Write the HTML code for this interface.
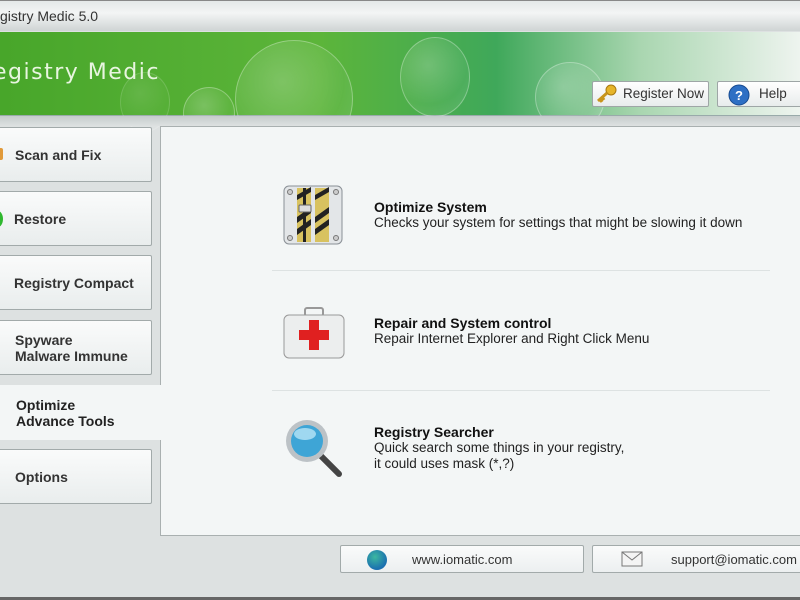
<!DOCTYPE html>
<html><head><style>
*{margin:0;padding:0;box-sizing:border-box}
body{width:800px;height:600px;overflow:hidden;background:#dde1e1;font-family:"Liberation Sans",sans-serif;position:relative}
.abs{position:absolute;white-space:nowrap}
.title{left:0;top:0;width:800px;height:31px;background:linear-gradient(#e4e8e8,#f3f5f5 40%,#cfd4d4);border-top:1px solid #888;font-size:14px;color:#333;padding:7px 0 0 0}
.banner{left:0;top:32px;width:800px;height:84px;background:linear-gradient(90deg,#48a62a 0%,#5cb53a 40%,#3fa85a 62%,#a9d6b0 80%,#eef4ef 100%);border-bottom:1px solid #9aa}
.sep{left:0;top:116px;width:800px;height:10px;background:linear-gradient(#c6cccc,#dde1e1)}
.bubble{border-radius:50%;border:1px solid rgba(255,255,255,.3);background:radial-gradient(circle at 40% 35%,rgba(255,255,255,.22),rgba(255,255,255,.05) 60%,rgba(255,255,255,.15))}
.logo{left:-7px;top:60px;font-family:"DejaVu Sans",sans-serif;font-size:22px;color:#e8f5e0;letter-spacing:1.5px}
.tb{background:linear-gradient(#fff,#e8ecec);border:1px solid #9ea6a6;border-radius:2px;font-size:13.5px;color:#333}
.panel{left:160px;top:126px;width:650px;height:410px;background:#f3f6f6;border:1px solid #a9b0b0}
.nav{left:-4px;width:156px;height:55px;background:linear-gradient(#fafbfb,#e9eded);border:1px solid #a2aaaa;border-radius:2px;font-weight:bold;font-size:14px;color:#333;padding-left:18px;display:flex;align-items:center;line-height:16px;white-space:nowrap}
.sel{left:0;top:385px;width:162px;height:55px;background:#f3f6f6;font-weight:bold;font-size:14px;color:#222;padding:12px 0 0 16px;line-height:16px}
.it h{display:block;font-weight:bold;font-size:14px;color:#111}
.it{font-size:13.5px;color:#222;line-height:16px}
.hr{height:1px;background:#dde2e2}
.fb{top:545px;height:28px;background:linear-gradient(#fafbfb,#eceff0);border:1px solid #a2aaaa;border-radius:2px;font-size:13px;color:#333}
</style></head><body>
<div class="abs title">gistry Medic 5.0</div>
<div class="abs banner">
 <div class="abs bubble" style="left:235px;top:8px;width:118px;height:118px"></div>
 <div class="abs bubble" style="left:183px;top:55px;width:52px;height:52px"></div>
 <div class="abs bubble" style="left:400px;top:5px;width:70px;height:80px"></div>
 <div class="abs bubble" style="left:535px;top:30px;width:70px;height:70px"></div>
 <div class="abs bubble" style="left:120px;top:40px;width:50px;height:60px;opacity:.5"></div>
</div>
<div class="abs logo">egistry Medic</div>
<div class="abs tb" style="left:592px;top:81px;width:117px;height:26px;padding:4px 0 0 30px">Register Now</div>
<svg class="abs" style="left:595px;top:83px" width="24" height="22"><circle cx="16" cy="7" r="5" fill="#e6b52a" stroke="#a87810"/><path d="M12 10 L3 18 M5 16 L7 19 M7 14 L9 17" stroke="#c8951c" stroke-width="3" fill="none"/></svg>
<div class="abs tb" style="left:717px;top:81px;width:90px;height:26px;padding:4px 0 0 41px">Help</div>
<svg class="abs" style="left:727px;top:83px" width="24" height="24"><circle cx="12" cy="12" r="10" fill="#2d6fc4" stroke="#174a90"/><text x="8" y="17" font-size="13" font-weight="bold" fill="#fff" font-family="Liberation Sans">?</text></svg>
<div class="abs sep"></div>

<div class="abs panel"></div>
<div class="abs nav" style="top:127px"><span class="abs" style="left:-2px;top:20px;width:8px;height:12px;background:#e19a3a;border-radius:2px"></span>Scan and Fix</div>
<div class="abs nav" style="top:191px;padding-left:17px"><span class="abs" style="left:-4px;top:19px;width:10px;height:16px;background:#2fb82f;border-radius:50%"></span>Restore</div>
<div class="abs nav" style="top:255px;padding-left:17px">Registry Compact</div>
<div class="abs nav" style="top:320px;padding-left:18px">Spyware<br>Malware Immune</div>
<div class="abs sel">Optimize<br>Advance Tools</div>
<div class="abs nav" style="top:449px;padding-left:18px;width:156px">Options</div>

<svg class="abs" style="left:283px;top:185px" width="60" height="60">
 <rect x="1" y="1" width="58" height="58" rx="5" fill="#e3e6e8" stroke="#8a9096"/>
 <rect x="14" y="3" width="14" height="54" fill="#d8c260"/><rect x="32" y="3" width="14" height="54" fill="#d8c260"/>
 <path d="M14 32 l14 -10 v6 l-14 10z M14 44 l14 -10 v6 l-14 10z M32 32 l14 -10 v6 l-14 10z M32 44 l14 -10 v6 l-14 10z M14 10 l14 -8 v5 l-14 8z M32 10 l14 -8 v5 l-14 8z" fill="#222"/>
 <rect x="20" y="3" width="3" height="54" fill="#222"/><rect x="16" y="20" width="12" height="7" rx="1" fill="#ddd" stroke="#666"/>
 <circle cx="7" cy="7" r="2.5" fill="#ccc" stroke="#777"/><circle cx="53" cy="7" r="2.5" fill="#ccc" stroke="#777"/><circle cx="7" cy="53" r="2.5" fill="#ccc" stroke="#777"/><circle cx="53" cy="53" r="2.5" fill="#ccc" stroke="#777"/>
</svg>
<svg class="abs" style="left:283px;top:306px" width="62" height="54">
 <rect x="22" y="2" width="18" height="8" rx="2" fill="none" stroke="#999" stroke-width="2"/>
 <rect x="1" y="9" width="60" height="43" rx="5" fill="#eceeee" stroke="#999"/>
 <rect x="26" y="14" width="10" height="30" fill="#e02020"/><rect x="16" y="24" width="30" height="10" fill="#e02020"/>
</svg>
<svg class="abs" style="left:283px;top:416px" width="62" height="62">
 <path d="M38 40 L56 58" stroke="#444" stroke-width="6" stroke-linecap="round"/>
 <circle cx="24" cy="25" r="21" fill="#bcc2c6"/><circle cx="24" cy="25" r="16" fill="#3ea5d6"/><ellipse cx="22" cy="18" rx="11" ry="6" fill="#9fd8f0"/>
</svg>

<div class="abs it" style="left:374px;top:199px"><h>Optimize System</h>Checks your system for settings that might be slowing it down</div>
<div class="abs hr" style="left:272px;top:270px;width:498px"></div>
<div class="abs it" style="left:374px;top:315px"><h>Repair and System control</h>Repair Internet Explorer and Right Click Menu</div>
<div class="abs hr" style="left:272px;top:390px;width:498px"></div>
<div class="abs it" style="left:374px;top:424px"><h>Registry Searcher</h>Quick search some things in your registry,<br>it could uses mask (*,?)</div>

<div class="abs fb" style="left:340px;width:244px;padding:6px 0 0 71px">www.iomatic.com</div>
<div class="abs" style="left:367px;top:550px;width:20px;height:20px;border-radius:50%;background:radial-gradient(circle at 40% 35%,#3cb8a0,#1a6fb0 70%)"></div>
<div class="abs fb" style="left:592px;width:215px;padding:6px 0 0 78px">support@iomatic.com</div>
<svg class="abs" style="left:621px;top:551px" width="22" height="16"><rect x="1" y="1" width="20" height="14" fill="#f4f4f4" stroke="#777"/><path d="M1 1 L11 9 L21 1" stroke="#777" fill="none"/></svg>
<div class="abs" style="left:0;top:597px;width:800px;height:3px;background:#666"></div>
</body></html>
